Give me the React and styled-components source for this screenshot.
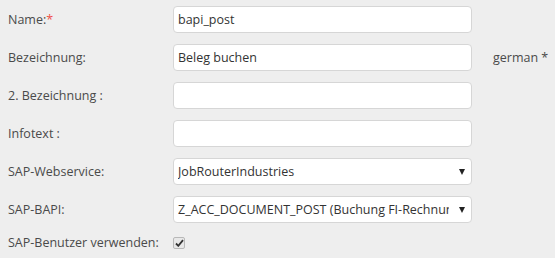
import React from "react";
import styled, { createGlobalStyle } from "styled-components";

const GlobalStyle = createGlobalStyle`
  html, body {
    margin: 0;
    padding: 0;
    background: #eeeeee;
  }
  body {
    font-family: "Open Sans", "Liberation Sans", sans-serif;
    font-size: 12.5px;
    color: #444;
  }
`;

const Form = styled.div`
  display: grid;
  grid-template-columns: 165px 299px auto;
  row-gap: 11px;
  padding: 6px 0 0 8px;
  align-items: center;
`;

const Label = styled.div`
  color: #4a4a4a;
  white-space: nowrap;
  line-height: 18px;
`;

const Required = styled.span`
  color: #f0504a;
`;

const TextInput = styled.div`
  box-sizing: border-box;
  height: 27px;
  background: #fff;
  border: 1px solid #d6d6d6;
  border-radius: 4px;
  padding: 0 4px;
  display: flex;
  align-items: center;
  color: #333;
  white-space: nowrap;
  overflow: hidden;
`;

const Select = styled(TextInput)`
  justify-content: space-between;
  padding-right: 6px;
`;

const SelectValue = styled.span`
  overflow: hidden;
  white-space: nowrap;
  flex: 1;
`;

const Arrow = styled.span`
  width: 0;
  height: 0;
  border-left: 3px solid transparent;
  border-right: 3px solid transparent;
  border-top: 6px solid #222;
  margin-left: 10px;
  flex-shrink: 0;
`;

const Note = styled.div`
  color: #4a4a4a;
  white-space: nowrap;
  padding-left: 21px;
`;

const CheckRow = styled.div`
  display: flex;
  align-items: center;
  height: 16px;
`;

const CheckBox = styled.span`
  box-sizing: border-box;
  width: 12px;
  height: 12px;
  border: 1px solid #b8b8b8;
  border-radius: 2px;
  background: #e8e8e8;
  display: flex;
  align-items: center;
  justify-content: center;
`;

const rows = [
  { label: "Name:", required: true, value: "bapi_post" },
  { label: "Bezeichnung:", value: "Beleg buchen", note: "german *" },
  { label: "2. Bezeichnung :", value: "" },
  { label: "Infotext :", value: "" },
  { label: "SAP-Webservice:", value: "JobRouterIndustries", select: true },
  {
    label: "SAP-BAPI:",
    value: "Z_ACC_DOCUMENT_POST (Buchung FI-Rechnung)",
    select: true,
  },
];

export default function App() {
  return (
    <>
      <GlobalStyle />
      <Form>
        {rows.map((r) => (
          <React.Fragment key={r.label}>
            <Label>
              {r.label}
              {r.required && <Required>*</Required>}
            </Label>
            {r.select ? (
              <Select>
                <SelectValue>{r.value}</SelectValue>
                <Arrow />
              </Select>
            ) : (
              <TextInput>{r.value}</TextInput>
            )}
            <Note>{r.note || ""}</Note>
          </React.Fragment>
        ))}
        <Label>SAP-Benutzer verwenden:</Label>
        <CheckRow>
          <CheckBox>
            <svg width="9" height="8" viewBox="0 0 9 8">
              <path d="M1 4.5 L3.3 6.8 L8 1.2" stroke="#333" strokeWidth="1.8" fill="none" />
            </svg>
          </CheckBox>
        </CheckRow>
        <Note />
      </Form>
    </>
  );
}
